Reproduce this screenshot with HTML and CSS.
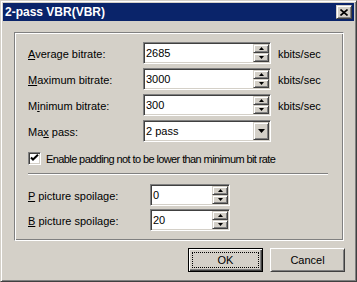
FILE: index.html
```html
<!DOCTYPE html>
<html lang="en">
<head>
    <meta charset="UTF-8">
    <title>2-pass VBR(VBR)</title>
    <link rel="stylesheet" href="styles.css">
</head>
<body>
    <div class="window">
        <div class="titlebar">
            <span class="title">2-pass VBR(VBR)</span>
            <button class="close-btn">
                <svg width="8" height="7" viewBox="0 0 8 7"><path d="M0.5 0.5 L7.5 6.5 M7.5 0.5 L0.5 6.5" stroke="#000" stroke-width="1.6"/></svg>
            </button>
        </div>

        <div class="content">
            <div class="groupbox">
                <div class="rate-grid">
                    <label class="lbl"><u>A</u>verage bitrate:</label>
                    <div class="field">
                        <span class="val">2685</span>
                        <span class="spinner">
                            <span class="spin-btn"><svg width="5" height="3" viewBox="0 0 5 3"><path d="M2.5 0 L5 3 L0 3 Z" fill="#000"/></svg></span>
                            <span class="spin-btn"><svg width="5" height="3" viewBox="0 0 5 3"><path d="M0 0 L5 0 L2.5 3 Z" fill="#000"/></svg></span>
                        </span>
                    </div>
                    <span class="unit">kbits/sec</span>

                    <label class="lbl"><u>M</u>aximum bitrate:</label>
                    <div class="field">
                        <span class="val">3000</span>
                        <span class="spinner">
                            <span class="spin-btn"><svg width="5" height="3" viewBox="0 0 5 3"><path d="M2.5 0 L5 3 L0 3 Z" fill="#000"/></svg></span>
                            <span class="spin-btn"><svg width="5" height="3" viewBox="0 0 5 3"><path d="M0 0 L5 0 L2.5 3 Z" fill="#000"/></svg></span>
                        </span>
                    </div>
                    <span class="unit">kbits/sec</span>

                    <label class="lbl">M<u>i</u>nimum bitrate:</label>
                    <div class="field">
                        <span class="val">300</span>
                        <span class="spinner">
                            <span class="spin-btn"><svg width="5" height="3" viewBox="0 0 5 3"><path d="M2.5 0 L5 3 L0 3 Z" fill="#000"/></svg></span>
                            <span class="spin-btn"><svg width="5" height="3" viewBox="0 0 5 3"><path d="M0 0 L5 0 L2.5 3 Z" fill="#000"/></svg></span>
                        </span>
                    </div>
                    <span class="unit">kbits/sec</span>

                    <label class="lbl">Ma<u>x</u> pass:</label>
                    <div class="field">
                        <span class="val">2 pass</span>
                        <span class="drop-btn"><svg width="7" height="4" viewBox="0 0 7 4"><path d="M0 0 L7 0 L3.5 4 Z" fill="#000"/></svg></span>
                    </div>
                    <span></span>
                </div>

                <div class="check-row">
                    <span class="checkbox">
                        <svg width="9" height="9" viewBox="0 0 9 9"><path d="M1 3.5 L3 5.5 L8 0.8" stroke="#000" stroke-width="2" fill="none"/></svg>
                    </span>
                    <span class="check-text">Enable padding not to be lower than minimum bit rate</span>
                </div>

                <div class="separator"></div>

                <div class="spoil-grid">
                    <label class="lbl"><u>P</u> picture spoilage:</label>
                    <div class="field">
                        <span class="val">0</span>
                        <span class="spinner">
                            <span class="spin-btn"><svg width="5" height="3" viewBox="0 0 5 3"><path d="M2.5 0 L5 3 L0 3 Z" fill="#000"/></svg></span>
                            <span class="spin-btn"><svg width="5" height="3" viewBox="0 0 5 3"><path d="M0 0 L5 0 L2.5 3 Z" fill="#000"/></svg></span>
                        </span>
                    </div>

                    <label class="lbl"><u>B</u> picture spoilage:</label>
                    <div class="field">
                        <span class="val">20</span>
                        <span class="spinner">
                            <span class="spin-btn"><svg width="5" height="3" viewBox="0 0 5 3"><path d="M2.5 0 L5 3 L0 3 Z" fill="#000"/></svg></span>
                            <span class="spin-btn"><svg width="5" height="3" viewBox="0 0 5 3"><path d="M0 0 L5 0 L2.5 3 Z" fill="#000"/></svg></span>
                        </span>
                    </div>
                </div>
            </div>

            <div class="buttons">
                <button class="btn btn-default"><span class="focus">OK</span></button>
                <button class="btn">Cancel</button>
            </div>
        </div>
    </div>
</body>
</html>
```

FILE: styles.css
```css
* {
    box-sizing: border-box;
    margin: 0;
    padding: 0;
}

body {
    background-color: #d4d0c8;
    font-family: "Liberation Sans", Arial, sans-serif;
    font-size: 11px;
    color: #000;
}

.window {
    width: 357px;
    height: 282px;
    padding: 2px;
    background-color: #d4d0c8;
    border: 1px solid;
    border-color: #d4d0c8 #404040 #404040 #d4d0c8;
    box-shadow: inset 1px 1px #fff, inset -1px -1px #808080;
}

.titlebar {
    height: 18px;
    display: flex;
    align-items: center;
    padding: 0 2px;
    background-color: #0a246a;
    color: #fff;
}

.title {
    font-size: 12px;
    font-weight: bold;
}

.close-btn {
    margin-left: auto;
    width: 16px;
    height: 14px;
    display: flex;
    align-items: center;
    justify-content: center;
    background-color: #d4d0c8;
    border: 1px solid;
    border-color: #d4d0c8 #404040 #404040 #d4d0c8;
    box-shadow: inset 1px 1px #fff, inset -1px -1px #808080;
}

.groupbox {
    height: 209px;
    margin: 11px 10px 0 11px;
    padding: 9px 13px 0 13px;
    border: 1px solid;
    border-color: #808080 #fff #fff #808080;
    box-shadow: inset 1px 1px #fff, inset -1px -1px #808080;
}

.rate-grid {
    display: grid;
    grid-template-columns: 115px 128px auto;
    grid-auto-rows: 22px;
    row-gap: 4px;
}

.spoil-grid {
    display: grid;
    grid-template-columns: 122px 80px;
    grid-auto-rows: 22px;
    row-gap: 3px;
    margin-top: 9px;
}

.lbl, .unit {
    padding-top: 4px;
    line-height: 16px;
}

.unit {
    padding-left: 7px;
}

/* sunken edit box */
.field {
    display: flex;
    padding: 1px;
    background-color: #fff;
    border: 1px solid;
    border-color: #808080 #fff #fff #808080;
    box-shadow: inset 1px 1px #404040, inset -1px -1px #d4d0c8;
}

.val {
    flex: 1;
    padding-left: 1px;
    line-height: 18px;
}

.spinner {
    width: 16px;
    display: flex;
    flex-direction: column;
}

.spin-btn, .drop-btn {
    display: flex;
    align-items: center;
    justify-content: center;
    background-color: #d4d0c8;
    border: 1px solid;
    border-color: #d4d0c8 #404040 #404040 #d4d0c8;
    box-shadow: inset 1px 1px #fff, inset -1px -1px #808080;
}

.spin-btn {
    height: 9px;
}

.drop-btn {
    width: 16px;
}

.check-row {
    display: flex;
    align-items: center;
    gap: 5px;
    margin-top: 10px;
    height: 13px;
}

.check-text {
    letter-spacing: -0.6px;
}

.checkbox {
    width: 13px;
    height: 13px;
    display: flex;
    align-items: center;
    justify-content: center;
    background-color: #fff;
    border: 1px solid;
    border-color: #808080 #fff #fff #808080;
    box-shadow: inset 1px 1px #404040, inset -1px -1px #d4d0c8;
}

.separator {
    margin-top: 8px;
    width: 300px;
    border-top: 1px solid #808080;
    border-bottom: 1px solid #fff;
}

.buttons {
    display: flex;
    justify-content: flex-end;
    gap: 7px;
    margin-top: 7px;
    padding-right: 9px;
}

.btn {
    width: 75px;
    height: 24px;
    font-family: "Liberation Sans", Arial, sans-serif;
    font-size: 11px;
    color: #000;
    background-color: #d4d0c8;
    border: 1px solid;
    border-color: #fff #404040 #404040 #fff;
    box-shadow: inset 1px 1px #d4d0c8, inset -1px -1px #808080;
}

.btn-default {
    display: flex;
    padding: 3px;
    border-color: #000;
    box-shadow: inset 1px 1px #fff, inset -1px -1px #404040, inset -2px -2px #808080;
}

.focus {
    flex: 1;
    display: flex;
    align-items: center;
    justify-content: center;
    border: 1px dotted #000;
}
```
